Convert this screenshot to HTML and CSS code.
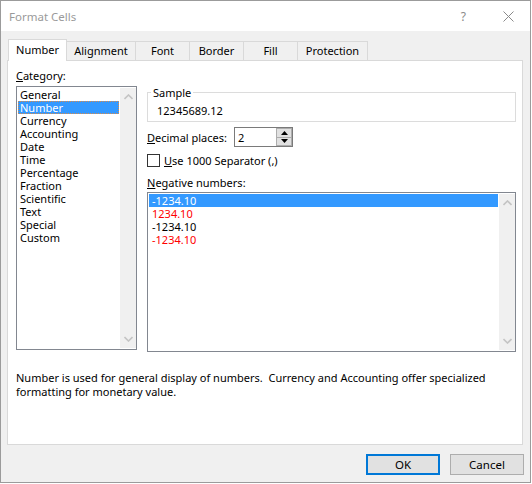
FILE: index.html
```html
<!DOCTYPE html>
<html>
<head>
<meta charset="utf-8">
<link rel="stylesheet" href="styles.css">
</head>
<body>
<div class="window">
  <div class="titlebar">
    <span class="title">Format Cells</span>
    <span class="help">?</span>
    <svg class="close" width="11" height="11" viewBox="0 0 11 11"><path d="M0.5 0.5 L10.5 10.5 M10.5 0.5 L0.5 10.5" stroke="#8a8a8a" stroke-width="1" fill="none"/></svg>
  </div>
  <div class="body">
    <div class="tabs">
      <div class="tab active tab-number">Number</div>
      <div class="tab tab-align">Alignment</div>
      <div class="tab tab-font">Font</div>
      <div class="tab tab-border">Border</div>
      <div class="tab tab-fill">Fill</div>
      <div class="tab tab-prot">Protection</div>
    </div>
    <div class="panel">
      <div class="panel-main">
        <div class="col-cat">
          <div class="label"><u>C</u>ategory:</div>
          <div class="listbox cat-list">
            <ul class="items">
              <li>General</li>
              <li class="selected focus">Number</li>
              <li>Currency</li>
              <li>Accounting</li>
              <li>Date</li>
              <li>Time</li>
              <li>Percentage</li>
              <li>Fraction</li>
              <li>Scientific</li>
              <li>Text</li>
              <li>Special</li>
              <li>Custom</li>
            </ul>
            <div class="scrollbar">
              <svg width="9" height="6" viewBox="0 0 9 6"><path d="M0.5 5 L4.5 1 L8.5 5" stroke="#c4c4c4" stroke-width="1.6" fill="none"/></svg>
              <svg width="9" height="6" viewBox="0 0 9 6"><path d="M0.5 1 L4.5 5 L8.5 1" stroke="#c4c4c4" stroke-width="1.6" fill="none"/></svg>
            </div>
          </div>
        </div>
        <div class="col-right">
          <fieldset class="sample">
            <legend>Sample</legend>
            <div class="sample-value">12345689.12</div>
          </fieldset>
          <div class="decimal-row">
            <span class="dec-label"><u>D</u>ecimal places:</span>
            <div class="spin">
              <span class="spin-value">2</span>
              <div class="spin-btns">
                <div class="spin-btn"><svg width="7" height="4" viewBox="0 0 7 4"><path d="M0 4 L3.5 0 L7 4 Z" fill="#000"/></svg></div>
                <div class="spin-btn"><svg width="7" height="4" viewBox="0 0 7 4"><path d="M0 0 L3.5 4 L7 0 Z" fill="#000"/></svg></div>
              </div>
            </div>
          </div>
          <div class="check-row">
            <span class="checkbox"></span>
            <span><u>U</u>se 1000 Separator (,)</span>
          </div>
          <div class="label neg-label"><u>N</u>egative numbers:</div>
          <div class="listbox neg-list">
            <ul class="items">
              <li class="selected">-1234.10</li>
              <li class="red">1234.10</li>
              <li>-1234.10</li>
              <li class="red">-1234.10</li>
            </ul>
            <div class="scrollbar">
              <svg width="9" height="6" viewBox="0 0 9 6"><path d="M0.5 5 L4.5 1 L8.5 5" stroke="#c4c4c4" stroke-width="1.6" fill="none"/></svg>
              <svg width="9" height="6" viewBox="0 0 9 6"><path d="M0.5 1 L4.5 5 L8.5 1" stroke="#c4c4c4" stroke-width="1.6" fill="none"/></svg>
            </div>
          </div>
        </div>
      </div>
      <p class="desc">Number is used for general display of numbers.&nbsp; Currency and Accounting offer specialized formatting for monetary value.</p>
    </div>
    <div class="buttons">
      <button class="btn btn-ok">OK</button>
      <button class="btn">Cancel</button>
    </div>
  </div>
</div>
</body>
</html>
```

FILE: styles.css
```css
* { box-sizing: border-box; }
html, body { margin: 0; padding: 0; }
body {
  background: #ffffff;
  font-family: "Noto Sans", "Open Sans", sans-serif;
  font-size: 11px;
  color: #000;
  width: 532px;
  height: 484px;
  overflow: hidden;
}
.window {
  width: 531px;
  height: 483px;
  border: 1px solid #9b9b9b;
  background: #f0f0f0;
  display: flex;
  flex-direction: column;
}
.titlebar {
  height: 30px;
  background: #fff;
  display: flex;
  align-items: center;
  flex: none;
}
.title {
  margin-left: 8px;
  color: #9a9a9a;
  font-size: 11.5px;
  margin-top: 1px;
}
.help {
  margin-left: auto;
  color: #8a8a8a;
  font-size: 12px;
  margin-right: 37px;
}
.close { margin-right: 16px; }

.body {
  flex: 1;
  display: flex;
  flex-direction: column;
  padding: 0 6px 0 6px;
}
.tabs {
  display: flex;
  align-items: flex-end;
  height: 29px;
  padding-left: 1px;
  position: relative;
  z-index: 2;
}
.tab {
  height: 19px;
  border: 1px solid #d9d9d9;
  border-bottom: none;
  border-left: none;
  background: #f0f0f0;
  text-align: center;
  line-height: 18px;
}
.tab.active {
  height: 22px;
  background: #fff;
  border-left: 1px solid #d9d9d9;
  margin-bottom: -1px;
  line-height: 19px;
}
.tab-number { width: 59px; }
.tab-align { width: 69px; }
.tab-font { width: 54px; }
.tab-border { width: 54px; }
.tab-fill { width: 54px; }
.tab-prot { width: 70px; }

.panel {
  width: 516px;
  height: 385px;
  background: #fff;
  border: 1px solid #d9d9d9;
  padding: 7px 6px 0 8px;
  flex: none;
}
.panel-main {
  display: flex;
  gap: 10px;
  align-items: flex-start;
}
.col-cat { width: 121px; flex: none; }
.col-right { flex: 1; display: flex; flex-direction: column; }
.label { line-height: 15px; height: 15px; margin-bottom: 3px; white-space: nowrap; }

.listbox {
  border: 1px solid #828790;
  display: flex;
  background: #fff;
}
.cat-list { height: 264px; }
.items {
  list-style: none;
  margin: 0;
  padding: 1px;
  flex: 1;
  min-width: 0;
}
.items li {
  height: 13px;
  line-height: 13px;
  padding-left: 2px;
  white-space: nowrap;
}
.items li.selected { background: #3399ff; color: #fff; }
.items li.focus { outline: 1px dotted #d98b4a; outline-offset: -1px; }
.items li.red { color: #ff0000; }
.scrollbar {
  width: 16px;
  flex: none;
  background: #f0f0f0;
  display: flex;
  flex-direction: column;
  justify-content: space-between;
  align-items: center;
  padding: 6px 0 6px;
  margin: 1px 0 1px 0;
}
.neg-list { height: 160px; }
.neg-list .items li { padding-left: 3px; }

.sample {
  margin: 17px 0 0 0;
  padding: 0 0 3px 3px;
  border: 1px solid #dcdcdc;
  min-width: 0;
}
.sample legend {
  padding: 0 2px;
  line-height: 15px;
}
.sample-value { padding-left: 6px; line-height: 14px; margin-top: 4px; }

.decimal-row {
  display: flex;
  align-items: center;
  margin-top: 5px;
  height: 20px;
}
.dec-label { width: 87px; white-space: nowrap; }
.spin {
  width: 59px;
  height: 20px;
  border: 1px solid #7a7a7a;
  display: flex;
  align-items: center;
  padding-left: 3px;
}
.spin-value { flex: 1; }
.spin-btns {
  width: 16px;
  height: 18px;
  display: flex;
  flex-direction: column;
}
.spin-btn {
  flex: 1;
  background: #e1e1e1;
  border: 1px solid #adadad;
  display: flex;
  align-items: center;
  justify-content: center;
}
.spin-btn + .spin-btn { border-top: none; }

.check-row {
  display: flex;
  align-items: center;
  margin-top: 6px;
  height: 14px;
  white-space: nowrap;
}
.checkbox {
  width: 13px;
  height: 13px;
  border: 1px solid #333;
  margin-right: 4px;
  background: #fff;
  flex: none;
}
.neg-label { margin-top: 8px; margin-bottom: 2px; }

.desc {
  margin: 19px 0 0 0;
  line-height: 14px;
  width: 490px;
}

.buttons {
  display: flex;
  justify-content: flex-end;
  gap: 10px;
  margin-top: 9px;
}
.btn {
  width: 74px;
  height: 21px;
  background: #e1e1e1;
  border: 1px solid #adadad;
  font-family: inherit;
  font-size: 11.5px;
  color: #000;
  padding: 0;
}
.btn-ok { border: 2px solid #0078d7; }
```
